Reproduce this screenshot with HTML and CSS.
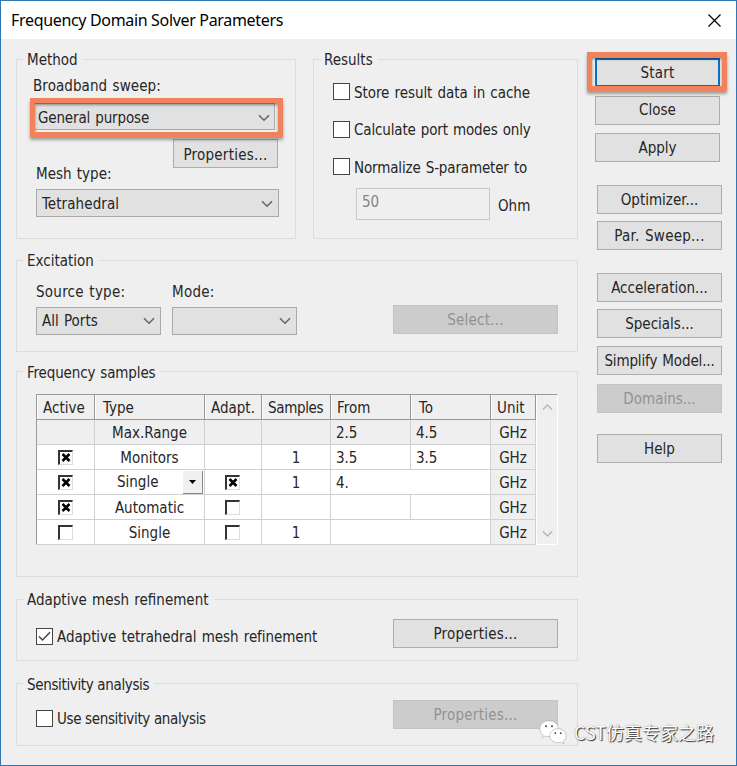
FILE: index.html
```html
<!DOCTYPE html>
<html lang="en">
<head>
<meta charset="utf-8">
<title>Frequency Domain Solver Parameters</title>
<link rel="stylesheet" href="styles.css">
</head>
<body>
<svg class="defs" width="0" height="0">
  <symbol id="chev" viewBox="0 0 12 8"><path d="M1 1.2 6 6.2 11 1.2" fill="none" stroke="currentColor" stroke-width="1.6"/></symbol>
  <symbol id="cross" viewBox="0 0 10 9"><path d="M1.500 1 8.500 8M8.500 1 1.500 8" fill="none" stroke="#000" stroke-width="2.600"/></symbol>
</svg>
<div class="window">
  <header class="titlebar">
    <h1>Frequency Domain Solver Parameters</h1>
    <svg class="close" viewBox="0 0 13 13"><path d="M.5.5l12 12M12.5.5l-12 12" fill="none" stroke="#000" stroke-width="1.2"/></svg>
  </header>
  <div class="content">
    <main class="groups">
      <div class="pair">
        <section class="group method">
          <h2>Method</h2>
          <div class="label sweep-label">Broadband sweep:</div>
          <div class="select sweep"><span>General purpose</span><svg><use href="#chev"/></svg><i class="mark"></i></div>
          <div class="button prop loose">Properties...</div>
          <div class="label mesh-label">Mesh type:</div>
          <div class="select mesh"><span>Tetrahedral</span><svg><use href="#chev"/></svg></div>
        </section>
        <section class="group results">
          <h2>Results</h2>
          <div class="check"><i class="box"></i><span class="long">Store result data in cache</span></div>
          <div class="check"><i class="box"></i><span class="snug">Calculate port modes only</span></div>
          <div class="check"><i class="box"></i><span class="snug">Normalize S-parameter to</span></div>
          <div class="ohm"><div class="input">50</div><span>Ohm</span></div>
        </section>
      </div>
      <section class="group excitation">
        <h2>Excitation</h2>
        <div class="row">
          <div class="field"><div class="label loose">Source type:</div><div class="select"><span>All Ports</span><svg><use href="#chev"/></svg></div></div>
          <div class="field"><div class="label loose">Mode:</div><div class="select"><span></span><svg><use href="#chev"/></svg></div></div>
          <div class="button disabled wide loose">Select...</div>
        </div>
      </section>
      <section class="group samples">
        <h2 class="snug">Frequency samples</h2>
        <div class="grid">
          <div class="cells">
            <b>Active</b><b>Type</b><b>Adapt.</b><b class="tight">Samples</b><b>From</b><b class="to">To</b><b>Unit</b>
            <div class="g"></div><div class="g">Max.Range</div><div class="g"></div><div class="g"></div><div class="g num">2.5</div><div class="g num">4.5</div><div class="g">GHz</div>
            <div><i class="tick"><svg><use href="#cross"/></svg></i></div><div>Monitors</div><div></div><div>1</div><div class="num">3.5</div><div class="num">3.5</div><div class="g">GHz</div>
            <div><i class="tick"><svg><use href="#cross"/></svg></i></div><div class="combo"><span>Single</span><em><svg viewBox="0 0 8 4"><path d="M0 0h7L3.5 4z"/></svg></em></div><div><i class="tick"><svg><use href="#cross"/></svg></i></div><div>1</div><div class="num span">4.</div><div class="g">GHz</div>
            <div><i class="tick"><svg><use href="#cross"/></svg></i></div><div>Automatic</div><div><i class="tick"></i></div><div></div><div></div><div></div><div class="g">GHz</div>
            <div><i class="tick"></i></div><div>Single</div><div><i class="tick"></i></div><div>1</div><div class="span"></div><div class="g">GHz</div>
          </div>
          <div class="scroll"><svg class="up"><use href="#chev"/></svg><svg><use href="#chev"/></svg></div>
        </div>
      </section>
      <section class="group adaptive">
        <h2>Adaptive mesh refinement</h2>
        <div class="row">
          <div class="check"><i class="box"><svg viewBox="0 0 15 15"><path d="M2 7.5 5.5 11 13 3.2" fill="none" stroke="#444" stroke-width="1.5"/></svg></i><span class="long">Adaptive tetrahedral mesh refinement</span></div>
          <div class="button wide loose">Properties...</div>
        </div>
      </section>
      <section class="group sensitivity">
        <h2 class="tight">Sensitivity analysis</h2>
        <div class="row">
          <div class="check"><i class="box"></i><span class="tight">Use sensitivity analysis</span></div>
          <div class="button disabled wide loose">Properties...</div>
        </div>
      </section>
    </main>
    <aside class="actions">
      <div class="set first">
        <div class="button default loose">Start<i class="mark"></i></div>
        <div class="button">Close</div>
        <div class="button">Apply</div>
      </div>
      <div class="set two">
        <div class="button">Optimizer...</div>
        <div class="button loose">Par. Sweep...</div>
      </div>
      <div class="set three">
        <div class="button">Acceleration...</div>
        <div class="button">Specials...</div>
        <div class="button snug">Simplify Model...</div>
        <div class="button disabled">Domains...</div>
      </div>
      <div class="button help">Help</div>
    </aside>
  </div>
  <div class="watermark">
    <svg viewBox="0 0 28 27">
      <g stroke="#999" stroke-width=".5">
      <path d="M10 .8C4.700 .8.700 4.300.700 8.700c0 2.500 1.300 4.700 3.400 6.200L3.200 17.800l3.300-1.700c1.100.4 2.300.5 3.500.5 5.200 0 9.300-3.500 9.300-7.900S15.200.8 10 .8z" fill="#fff"/>
      <path d="M19 8.700c-4.700 0-8.300 3.100-8.300 7s3.600 7 8.300 7c1 0 2-.1 2.900-.4l3 1.700-.8-2.800c1.900-1.300 3.100-3.200 3.100-5.500 0-3.900-3.600-7-8.200-7z" fill="#fff"/>
      </g>
      <g fill="#444"><circle cx="7" cy="6.200" r="1"/><circle cx="13" cy="6.200" r="1"/><circle cx="16.300" cy="13.200" r=".9"/><circle cx="21.700" cy="13.200" r=".9"/></g>
    </svg>
    <span>CST仿真专家之路</span>
  </div>
</div>
</body>
</html>
```
FILE: styles.css
```css
* { box-sizing: border-box; }
body { margin: 0; font: 15px/20px "DejaVu Sans Condensed", "DejaVu Sans", sans-serif; font-stretch: condensed; color: #262626; letter-spacing: 0; word-spacing: 1px; }
.loose { letter-spacing: .25px; }
.snug { letter-spacing: -.15px; }
.long { letter-spacing: -.06px; }
.tight { letter-spacing: -.35px; word-spacing: 0; }
.defs { position: absolute; }
.window { position: relative; width: 737px; height: 766px; border: 1px solid #2f78b5; background: #efefef; overflow: hidden; }
.titlebar { height: 38px; padding: 0 15px 0 10px; display: flex; align-items: center; justify-content: space-between; background: #fff; }
h1 { margin: 0; font: 400 16px/20px "Noto Sans", sans-serif; letter-spacing: -.33px; word-spacing: 0; color: #000; }
.close { width: 13px; height: 13px; }
.content { display: flex; justify-content: space-between; padding: 20px 14px 0 15px; }
.groups { width: 562px; display: flex; flex-direction: column; }
.pair { display: flex; gap: 17px; }
.group { border: 1px solid #dcdcdc; padding: 0 19px; }
h2 { width: max-content; height: 20px; margin: -10px 0 0 -13px; padding: 0 5px 0 4px; font-size: 15px; font-weight: 400; background: #efefef; }
.method { width: 280px; height: 180px; padding-right: 17px; display: flex; flex-direction: column; }
.results { flex: 1; height: 180px; }
.sweep-label { margin: 6px 0 0 -3px; letter-spacing: .08px; }
.label { height: 20px; white-space: nowrap; }
.select { position: relative; height: 28px; border: 1px solid #a9a9a9; background: #e1e1e1; display: flex; align-items: center; justify-content: space-between; padding: 0 5px 0 5px; }
.select svg { width: 12px; height: 8px; color: #666; }
.sweep { width: 242px; height: 27px; margin: 7px 0 0 -3px; padding: 2px 4px 0 4px; letter-spacing: -.15px; }
.mesh span { letter-spacing: .1px; padding-top: 1px; }
.prop { width: 105px; height: 30px; margin: 9px 0 0; padding-top: 2px; align-self: flex-end; }
.mesh-label { margin-top: -4px; }
.mesh { margin-top: 5px; padding-top: 1px; width: 243px; }
.mark { position: absolute; inset: -6px -9px -8px -4px; border: 5px solid #f0825c; box-shadow: 0 3px 3px rgba(0,0,0,.35), inset 0 2px 3px rgba(0,0,0,.4); }
.button { height: 29px; border: 1px solid #adadad; background: #e1e1e1; display: flex; align-items: center; justify-content: center; white-space: nowrap; }
.disabled { background: #ccc; border-color: #c4c4c4; color: #929292; }
.results .check { height: 37.500px; }
.results .check span { padding-top: 2px; }
.results h2 + .check { margin-top: 3px; }
.check { display: flex; align-items: center; gap: 4px; white-space: nowrap; }
.box { width: 17px; height: 17px; border: 1px solid #444; background: #fff; flex: none; }
.box svg { display: block; width: 15px; height: 15px; }
.ohm { display: flex; gap: 8px; align-items: center; margin: 2px 0 0 23px; }
.ohm span { padding-top: 5px; }
.input { width: 134px; height: 32px; padding: 3px 5px; border: 1px solid #c8c8c8; color: #858585; }
.excitation { height: 92px; margin-top: 21px; }
.row { display: flex; }
.excitation .row { padding-top: 11px; align-items: flex-end; }
.field { width: 125px; margin-right: 11px; }
.field .select { margin-top: 5px; }
.wide { width: 165px; margin-left: auto; }
.excitation .wide { margin-bottom: 1px; }
.samples { height: 206px; margin-top: 19px; }
.samples h2, .sensitivity h2 { padding-top: 1px; }
.grid { display: flex; margin-top: 12px; width: 522px; height: 151px; border: 1px solid #999; border-right-color: #fff; border-bottom-color: #fff; }
.cells { display: grid; grid-template-columns: 58px 110px 57px 69px 80px 80px 45px; grid-template-rows: 25px repeat(5, 25px); }
.cells > * { display: flex; align-items: center; justify-content: center; border-right: 1px solid #d0d0d0; border-bottom: 1px solid #d0d0d0; background: #fff; white-space: nowrap; padding-top: 1px; }
.cells > b { font-weight: 400; background: #efefef; border-color: #969696; justify-content: flex-start; padding-left: 6px; box-shadow: inset 1px 0 #fff; }
.cells > b:nth-child(2), .cells > .to { padding-left: 8px; }
.cells > .g { background: #efefef; }
.cells > .num { justify-content: flex-start; padding-left: 5px; }
.cells > .span { grid-column: span 2; }
.cells > .combo { justify-content: space-between; padding: 0 1px 0 22px; }
.combo em { width: 20px; height: 23px; background: #f0f0f0; border-right: 1px solid #888; border-bottom: 1px solid #888; display: flex; align-items: center; justify-content: center; }
.combo svg { width: 8px; height: 4px; }
.tick { width: 15px; height: 15px; margin: -1px 1px 0 0; border: 1px solid #ddd; border-top: 2px solid #333; border-left: 2px solid #333; background: #fff; padding: 1px; }
.tick svg { display: block; width: 10px; height: 9px; }
.scroll { flex: 1; display: flex; flex-direction: column; justify-content: space-between; align-items: center; padding: 8px 0 6px; color: #b8b8b8; border-left: 1px solid #fff; }
.scroll svg { width: 11px; height: 8px; }
.scroll .up { transform: rotate(180deg); }
.adaptive { height: 62px; margin-top: 22px; }
.adaptive .row { margin-top: 9px; }
.sensitivity { height: 63px; margin-top: 22px; }
.sensitivity .row { margin-top: 6px; }
.row .check { padding-top: 7px; }
.adaptive .check { padding-top: 5px; }
.row .check span { padding-top: 1px; }
.sensitivity .check span { padding-top: 2px; }
.actions { width: 127px; display: flex; flex-direction: column; padding-left: 2px; margin-top: -1px; }
.set { display: flex; flex-direction: column; }
.first { width: 125px; margin-left: -2px; gap: 8.500px; }
.default { position: relative; border: 2px solid #0a70c5; }
.default .mark { inset: -8px -9px -6px -10px; }
.two { margin-top: 23px; gap: 7px; }
.three { margin-top: 23px; gap: 8px; }
.three .button:nth-child(2) { margin-top: -1px; }
.three .disabled { margin-top: 1px; }
.help { margin-top: 21px; }
.watermark { position: absolute; left: 538px; top: 719px; display: flex; gap: 7px; align-items: flex-start; }
.watermark svg { width: 28px; height: 27px; }
.watermark span { font: 18px/25px "Noto Sans CJK SC", sans-serif; letter-spacing: 0; word-spacing: 0; color: #fff; text-shadow: 1px 1px 1px #333, 0 0 1px #777; white-space: nowrap; }
```
